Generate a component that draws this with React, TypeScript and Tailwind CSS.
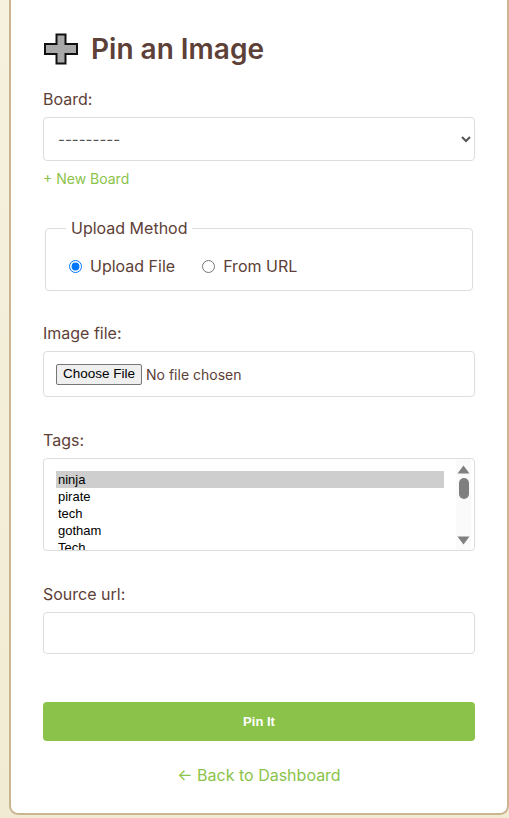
import React, { useState } from 'react';

const tags = ['ninja', 'pirate', 'tech', 'gotham', 'Tech'];

function PlusIcon() {
  return (
    <svg width="36" height="32" viewBox="0 0 36 32" className="shrink-0">
      <path
        d="M13.5 1.5 H22.5 V11 H34 V21 H22.5 V30.5 H13.5 V21 H2 V11 H13.5 Z"
        fill="#a8a8a8"
        stroke="#111"
        strokeWidth="2"
        strokeLinejoin="miter"
      />
    </svg>
  );
}

export default function App() {
  const [method, setMethod] = useState<'file' | 'url'>('file');

  return (
    <div className="h-[818px] overflow-hidden bg-gradient-to-b from-[#f6f1de] to-[#f1ebd3] pl-[9px] font-['Inter','Noto_Sans',sans-serif] text-[#5d4037]">
      <div className="bg-white border-x-[2px] border-b-[2px] border-[#cbb591] rounded-b-[9px] px-[32px] pt-[31px] pb-[26px]">
        {/* Header */}
        <h1 className="flex items-center gap-[12px] text-[28px] leading-[36px] font-semibold text-[#5d4037] mb-[20px]">
          <PlusIcon />
          <span>Pin an Image</span>
        </h1>

        {/* Board */}
        <label className="block text-[16px] leading-[24px] mb-[6px]">Board:</label>
        <select className="w-full h-[44px] border border-[#dddddd] rounded-[4px] px-[10px] text-[15px] text-[#555] bg-white">
          <option>---------</option>
        </select>
        <a href="#" className="block mt-[8px] text-[14px] leading-[20px] text-[#8bc34a]">+ New Board</a>

        {/* Upload method */}
        <fieldset className="mx-[2px] mt-[29px] border border-[#dddddd] rounded-[4px] px-[20px] pt-[16px] pb-[12px]">
          <legend className="px-[5px] text-[16px] leading-[20px]">Upload Method</legend>
          <div className="flex items-center gap-[24px] text-[16px] leading-[24px]">
            <label className="flex items-center gap-[5px]">
              <input
                type="radio"
                name="method"
                checked={method === 'file'}
                onChange={() => setMethod('file')}
                className="m-[3px] w-[13px] h-[13px]"
              />
              Upload File
            </label>
            <label className="flex items-center gap-[5px]">
              <input
                type="radio"
                name="method"
                checked={method === 'url'}
                onChange={() => setMethod('url')}
                className="m-[3px] w-[13px] h-[13px]"
              />
              From URL
            </label>
          </div>
        </fieldset>

        {/* Image file */}
        <label className="block mt-[30px] text-[16px] leading-[24px] mb-[6px]">Image file:</label>
        <div className="h-[46px] border border-[#dddddd] rounded-[4px] flex items-center px-[12px]">
          <span className="px-[6px] h-[21px] flex items-center bg-[#efefef] border border-[#767676] rounded-[2px] text-[13.5px] text-black font-['Liberation_Sans',Arial,sans-serif]">
            Choose File
          </span>
          <span className="ml-[4px] text-[14px] text-[#5d4037]">No file chosen</span>
        </div>

        {/* Tags */}
        <label className="block mt-[31px] text-[16px] leading-[24px] mb-[6px]">Tags:</label>
        <div className="h-[93px] border border-[#dddddd] rounded-[4px] flex overflow-hidden">
          <div className="flex-1 pl-[12px] pr-[12px] pt-[12px] font-['Liberation_Sans',Arial,sans-serif] text-[13px] leading-[17px] text-black">
            {tags.map((t, i) => (
              <div key={t} className={`px-[2px] ${i === 0 ? 'bg-[#cecece]' : ''}`}>{t}</div>
            ))}
          </div>
          <div className="w-[15px] mr-[3px] bg-[#fafafa] flex flex-col items-center pt-[6px] pb-[5px]">
            <svg width="13" height="9" viewBox="0 0 13 9"><path d="M6.5 0.5 L12.5 8.5 H0.5 Z" fill="#7f7f7f" /></svg>
            <div className="w-[10px] h-[21px] mt-[4px] rounded-full bg-[#7f7f7f]" />
            <div className="flex-1" />
            <svg width="13" height="9" viewBox="0 0 13 9"><path d="M0.5 0.5 H12.5 L6.5 8.5 Z" fill="#7f7f7f" /></svg>
          </div>
        </div>

        {/* Source url */}
        <label className="block mt-[31px] text-[16px] leading-[24px] mb-[6px]">Source url:</label>
        <input type="text" className="block w-full h-[42px] border border-[#dddddd] rounded-[4px] px-[10px] text-[15px]" />

        {/* Submit */}
        <button className="mt-[48px] w-full h-[39px] bg-[#8bc34a] rounded-[4px] text-white text-[13px] font-bold font-['Liberation_Sans',Arial,sans-serif]">
          Pin It
        </button>

        <div className="mt-[22px] text-center">
          <a href="#" className="text-[16px] leading-[24px] text-[#8bc34a]">← Back to Dashboard</a>
        </div>
      </div>
    </div>
  );
}
